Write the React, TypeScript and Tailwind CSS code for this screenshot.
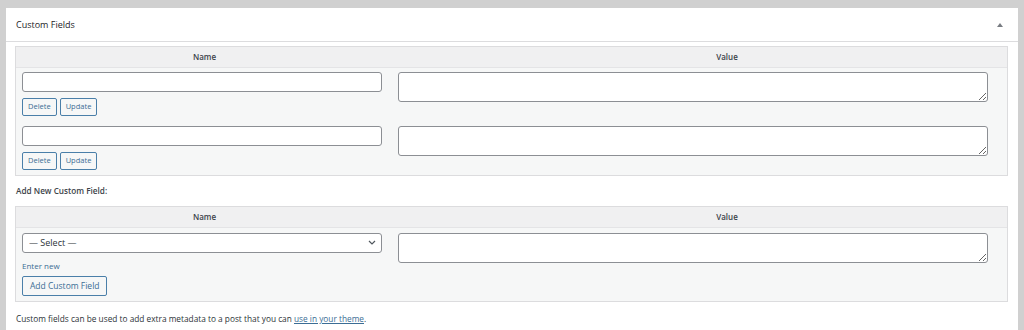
import React from "react";

const font = { fontFamily: '"Open Sans", "Noto Sans", sans-serif' };

function SmallButton({ label }: { label: string }) {
  return (
    <button
      type="button"
      className="h-[18px] px-[5px] rounded-[2px] border border-[#4a7fa9] bg-[#f6f7f7] text-[7.5px] leading-none text-[#3b6d95]"
    >
      {label}
    </button>
  );
}

function TableHeader() {
  return (
    <div className="flex h-[21px] items-center bg-[#f0f0f1] border-b border-[#e4e4e6] text-[8px] font-semibold text-[#3c434a]">
      <div className="w-[377px] text-center">Name</div>
      <div className="flex-1 text-center pl-[54px]">Value</div>
    </div>
  );
}

function MetaRow() {
  return (
    <div className="flex">
      <div className="w-[377px] pl-[6px] pr-[10px]">
        <input
          type="text"
          className="block w-[360px] h-[20px] rounded-[3px] border border-[#8c8f94] bg-white"
        />
        <div className="flex gap-[3px] mt-[6px]">
          <SmallButton label="Delete" />
          <SmallButton label="Update" />
        </div>
      </div>
      <div className="flex-1 pl-[5px]">
        <textarea className="block w-[590px] h-[30px] rounded-[3px] border border-[#8c8f94] bg-white" />
      </div>
    </div>
  );
}

export default function App() {
  return (
    <div className="h-[330px] overflow-hidden bg-[#d0d0d0] pt-[8px] pl-[6px] pr-[6px]" style={font}>
      <div className="bg-white h-[322px]">
        <div className="flex items-center justify-between h-[34px] border-b border-[#dcdcde] pl-[10px] pr-[15px]">
          <span className="text-[9px] text-[#1d2327] pt-[1px]">Custom Fields</span>
          <svg width="6" height="4" viewBox="0 0 6 4">
            <path d="M3 0 L6 4 L0 4 Z" fill="#787c82" />
          </svg>
        </div>

        <div className="pl-[9px] pr-[10px] pt-[4px]">
          <div className="border border-[#dcdcde] bg-[#f6f7f7]">
            <TableHeader />
            <div className="flex flex-col gap-[10px] pt-[4px] pb-[5px]">
              <MetaRow />
              <MetaRow />
            </div>
          </div>

          <div className="mt-[9px] h-[12px] flex items-center pl-[1px] text-[8.2px] font-semibold text-[#3c434a]">
            Add New Custom Field:
          </div>

          <div className="mt-[9px] border border-[#dcdcde] bg-[#f6f7f7]">
            <TableHeader />
            <div className="flex pt-[5px] pb-[5px]">
              <div className="w-[377px] pl-[6px] pr-[10px]">
                <div className="relative w-[360px] h-[20px]">
                  <select className="appearance-none block w-full h-full rounded-[3px] border border-[#8c8f94] bg-white pl-[6px] text-[9px] text-[#2c3338]">
                    <option>— Select —</option>
                  </select>
                  <svg
                    className="absolute right-[6px] top-[7px]"
                    width="8"
                    height="5"
                    viewBox="0 0 8 5"
                  >
                    <path d="M1 1 L4 4 L7 1" fill="none" stroke="#50575e" strokeWidth="1.2" />
                  </svg>
                </div>
                <div className="mt-[7px] text-[8px] leading-[11px] text-[#3b6d95]">Enter new</div>
                <button
                  type="button"
                  className="mt-[5px] h-[20px] px-[7px] rounded-[2px] border border-[#4a7fa9] bg-[#f6f7f7] text-[8.5px] leading-none text-[#3b6d95]"
                >
                  Add Custom Field
                </button>
              </div>
              <div className="flex-1 pl-[5px]">
                <textarea className="block w-[590px] h-[30px] rounded-[3px] border border-[#8c8f94] bg-white" />
              </div>
            </div>
          </div>

          <p className="mt-[11px] pl-[1px] text-[8.3px] text-[#2c3338]">
            Custom fields can be used to add extra metadata to a post that you can{" "}
            <a href="#" className="underline text-[#3b6d95]">
              use in your theme
            </a>
            .
          </p>
        </div>
      </div>
    </div>
  );
}
